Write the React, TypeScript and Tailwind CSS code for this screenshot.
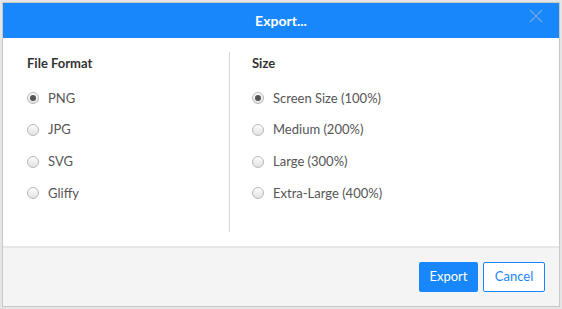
import React from 'react';

function Radio({ label, checked }: { label: string; checked?: boolean }) {
  return (
    <label className="flex h-[31.7px] items-center gap-[9px] text-[13px] text-[#555]">
      <span className="flex h-[12px] w-[12px] items-center justify-center rounded-full border border-[#b8b8b8] bg-gradient-to-b from-[#fdfdfd] to-[#e2e2e2]">
        {checked && <span className="h-[6px] w-[6px] rounded-full bg-[#555]" />}
      </span>
      {label}
    </label>
  );
}

export default function App() {
  return (
    <div className="h-[309px] w-[562px] bg-[#e5e5e5] p-[2px] font-['Lato','Open_Sans',sans-serif]">
      <div className="flex h-full flex-col border border-[#c9c9c9] bg-white">
        <div className="relative flex h-[35px] items-center justify-center bg-[#1787fb]">
          <span className="text-[14px] font-bold text-white">Export...</span>
          <button className="absolute right-[16px] top-[6px] text-[#6ea6dc]">
            <svg width="14" height="14" viewBox="0 0 14 14" fill="none" stroke="currentColor" strokeWidth="1.3">
              <path d="M1 1 L13 13 M13 1 L1 13" />
            </svg>
          </button>
        </div>
        <div className="flex flex-1 pt-[14px] pb-[14px]">
          <div className="w-[227px] border-r border-[#d9d9d9] pl-[24px]">
            <div className="mb-[9px] pt-[2px] text-[13px] font-bold text-[#333]">File Format</div>
            <Radio label="PNG" checked />
            <Radio label="JPG" />
            <Radio label="SVG" />
            <Radio label="Gliffy" />
          </div>
          <div className="pl-[22px]">
            <div className="mb-[9px] pt-[2px] text-[13px] font-bold text-[#333]">Size</div>
            <Radio label="Screen Size (100%)" checked />
            <Radio label="Medium (200%)" />
            <Radio label="Large (300%)" />
            <Radio label="Extra-Large (400%)" />
          </div>
        </div>
        <div className="flex h-[60px] items-center justify-end gap-[5px] border-t-2 border-[#e6e6e6] bg-[#f4f4f4] pr-[14px]">
          <button className="h-[30px] w-[59px] rounded-[2px] bg-[#1787fb] text-[13px] text-white">Export</button>
          <button className="h-[30px] w-[62px] rounded-[2px] border border-[#1787fb] bg-white text-[13px] text-[#1787fb]">Cancel</button>
        </div>
      </div>
    </div>
  );
}
